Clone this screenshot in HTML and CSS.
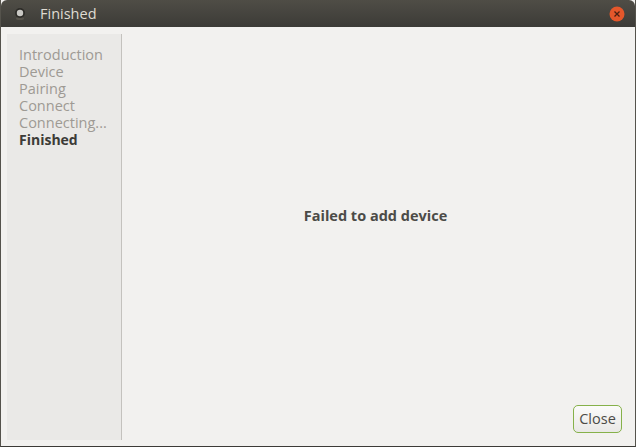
FILE: index.html
```html
<!DOCTYPE html>
<html lang="en">
<head>
<meta charset="utf-8">
<title>Finished</title>
<link rel="stylesheet" href="styles.css">
</head>
<body>
<div class="window">
  <header class="titlebar">
    <svg class="app-icon" width="12" height="14" viewBox="0 0 12 14" aria-hidden="true">
      <ellipse cx="6" cy="11.5" rx="4" ry="1.5" fill="#57544c"/>
      <circle cx="6" cy="6" r="5" fill="#2d2c28"/>
      <circle cx="6" cy="6" r="3.2" fill="#c9c8c4"/>
    </svg>
    <span class="title">Finished</span>
    <span class="close-btn">
      <svg width="16" height="16" viewBox="0 0 16 16" aria-hidden="true">
        <circle cx="8" cy="8" r="7.5" fill="#e4572b"/>
        <path d="M5.5 5.5l5 5M10.5 5.5l-5 5" stroke="#4a2012" stroke-width="1.3" fill="none"/>
      </svg>
    </span>
  </header>
  <div class="content">
    <nav class="sidebar">
      <div class="step">Introduction</div>
      <div class="step">Device</div>
      <div class="step">Pairing</div>
      <div class="step">Connect</div>
      <div class="step">Connecting...</div>
      <div class="step current">Finished</div>
    </nav>
    <main class="main">
      <div class="message">Failed to add device</div>
      <div class="actions"><button class="close" type="button">Close</button></div>
    </main>
  </div>
</div>
</body>
</html>
```
FILE: styles.css
```css
html, body {
  margin: 0;
  height: 100%;
  background: #3c3b37;
}
body {
  font-family: "Open Sans", "Noto Sans", sans-serif;
  font-size: 14.5px;
}
.window {
  width: 636px;
  height: 447px;
  display: flex;
  flex-direction: column;
  box-sizing: border-box;
  border-left: 1px solid #55534c;
  border-right: 1px solid #55534c;
  border-bottom: 1px solid #3c3b37;
  overflow: hidden;
  background: #f2f1ef;
}
.titlebar {
  height: 27px;
  flex: none;
  display: flex;
  align-items: center;
  padding: 0 10px 0 13px;
  background: linear-gradient(#4f4d46, #3c3b37);
  border-radius: 6px 6px 0 0;
}
.app-icon {
  flex: none;
}
.title {
  margin-left: 14px;
  flex: 1;
  color: #dfdbd2;
  font-size: 14.5px;
  font-weight: 500;
}
.close-btn {
  display: flex;
}
.content {
  flex: 1;
  display: flex;
  padding: 7px 0 6px 6px;
  min-height: 0;
}
.sidebar {
  box-sizing: border-box;
  width: 115px;
  flex: none;
  background: #eae9e7;
  border-right: 1px solid #c4c2be;
  padding: 12px 0 0 12px;
}
.step {
  height: 17px;
  line-height: 17px;
  color: #9e9a94;
  white-space: nowrap;
}
.step.current {
  color: #3c3b37;
  font-size: 14px;
  font-weight: 700;
}
.main {
  flex: 1;
  display: flex;
  flex-direction: column;
  align-items: center;
  padding-right: 6px;
}
.message {
  margin-top: 173px;
  font-weight: 700;
  color: #4c4b47;
  line-height: 17px;
}
.actions {
  margin-top: auto;
  align-self: flex-end;
  margin-right: 7px;
  margin-bottom: 7px;
}
.close {
  display: block;
  box-sizing: border-box;
  width: 49px;
  height: 28px;
  padding: 0 0 2px;
  font: inherit;
  color: #4c4b47;
  border: 1px solid #86b14a;
  border-radius: 5px;
  background: linear-gradient(#fbfbfa, #e9e8e6);
}
```
